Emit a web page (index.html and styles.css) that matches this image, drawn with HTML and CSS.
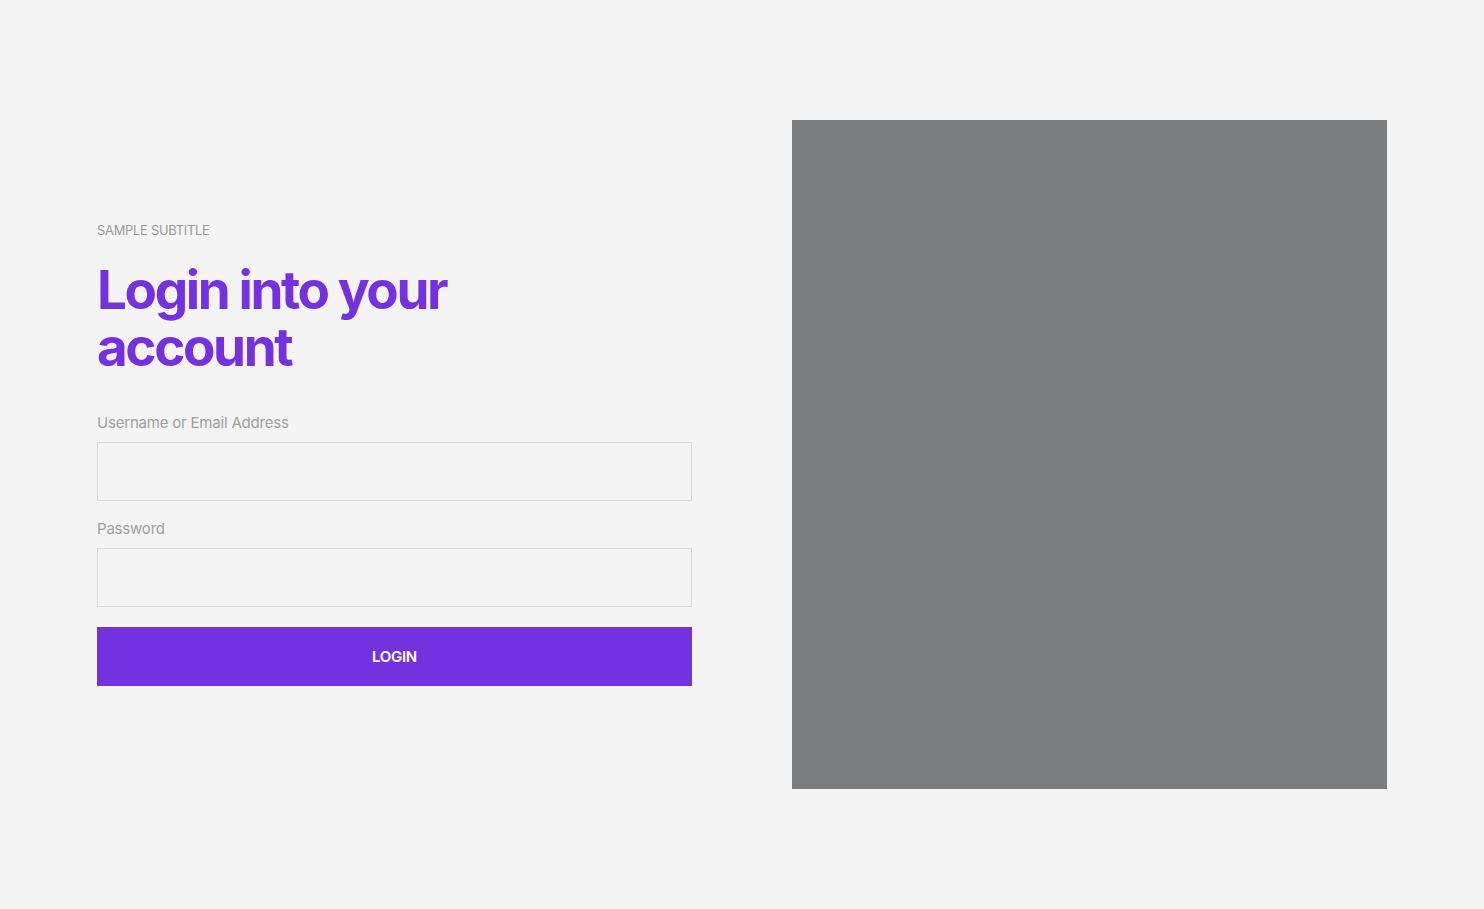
FILE: index.html
```html
<!DOCTYPE html>
<html>
<head>
<meta charset="utf-8">
<link rel="stylesheet" href="styles.css">
</head>
<body>
<main class="page">
  <section class="form-col">
    <div class="subtitle">SAMPLE SUBTITLE</div>
    <h1 class="title">Login into your<br>account</h1>
    <form class="form">
      <label class="label">Username or Email Address</label>
      <input class="input" type="text">
      <label class="label">Password</label>
      <input class="input input-last" type="password">
      <button class="btn" type="button">LOGIN</button>
    </form>
  </section>
  <section class="image-col"></section>
</main>
</body>
</html>
```
FILE: styles.css
```css
html, body { margin: 0; padding: 0; }
body {
  background: #f4f4f4;
  font-family: Inter, "Liberation Sans", sans-serif;
  width: 1484px;
  height: 909px;
}
.page {
  display: flex;
  align-items: center;
  justify-content: center;
  gap: 100px;
  height: 909px;
}
.form-col {
  width: 595px;
  display: flex;
  flex-direction: column;
}
.subtitle {
  font-size: 12.8px;
  color: #9a9a9a;
  letter-spacing: -0.2px;
  line-height: 15px;
}
.title {
  margin: 24px 0 0 0;
  font-size: 53px;
  font-weight: 700;
  line-height: 57px;
  letter-spacing: -2.4px;
  color: #7531e0;
}
.form {
  display: flex;
  flex-direction: column;
  margin-top: 38px;
}
.label {
  font-size: 15px;
  color: #a0a0a0;
  line-height: 18px;
  letter-spacing: -0.2px;
  margin-bottom: 10px;
}
.input {
  box-sizing: border-box;
  height: 59px;
  border: 1px solid #dadada;
  background: #f4f4f4;
  margin: 0 0 19px 0;
  padding: 0 12px;
  font: inherit;
}
.input-last { margin-bottom: 20px; }
.btn {
  height: 59px;
  border: none;
  background: #7531e0;
  color: #fff;
  font-family: Inter, "Liberation Sans", sans-serif;
  font-size: 15px;
  font-weight: 600;
  letter-spacing: -0.3px;
  cursor: pointer;
}
.image-col {
  width: 595px;
  height: 669px;
  background: #7c7d7e;
}
```
